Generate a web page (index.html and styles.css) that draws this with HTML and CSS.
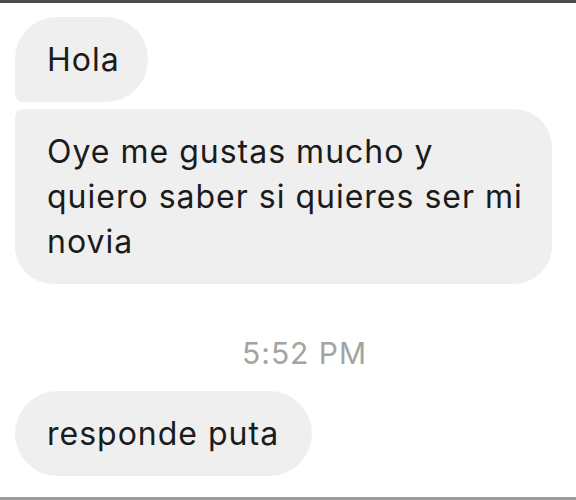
FILE: index.html
```html
<!DOCTYPE html>
<html>
<head>
<meta charset="utf-8">
<link rel="stylesheet" href="styles.css">
</head>
<body>
<div class="screen">
  <div class="chat">
    <div class="group">
      <div class="bubble first">Hola</div>
      <div class="bubble last">Oye me gustas mucho y<br>quiero saber si quieres ser mi<br>novia</div>
    </div>
    <div class="time">5:52 PM</div>
    <div class="bubble single">responde puta</div>
  </div>
</div>
</body>
</html>
```
FILE: styles.css
```css
html, body {
  margin: 0;
  padding: 0;
  background: #ffffff;
}
.screen {
  width: 576px;
  height: 500px;
  box-sizing: border-box;
  border-top: 3px solid #4a4a4a;
  border-bottom: 3px solid #9a9a9a;
  background: #ffffff;
  overflow: hidden;
}
.chat {
  display: flex;
  flex-direction: column;
  align-items: flex-start;
  padding: 14px 0 0 15px;
  font-family: Inter, "Liberation Sans", Arial, sans-serif;
  font-size: 32px;
  line-height: 45px;
  letter-spacing: 1px;
  color: #1b1b1b;
}
.group {
  display: flex;
  flex-direction: column;
  align-items: flex-start;
  gap: 7px;
}
.bubble {
  background: #efefef;
  padding: 20px 33px 20px 32px;
}
.first {
  border-radius: 42px 42px 42px 8px;
  padding-right: 28px;
}
.last {
  border-radius: 8px 38px 38px 38px;
  padding-right: 29px;
}
.single {
  border-radius: 43px;
  margin-top: 15px;
}
.time {
  align-self: stretch;
  margin-top: 47px;
  padding-left: 227px;
  color: #a3a3a3;
  font-size: 30px;
}
```
